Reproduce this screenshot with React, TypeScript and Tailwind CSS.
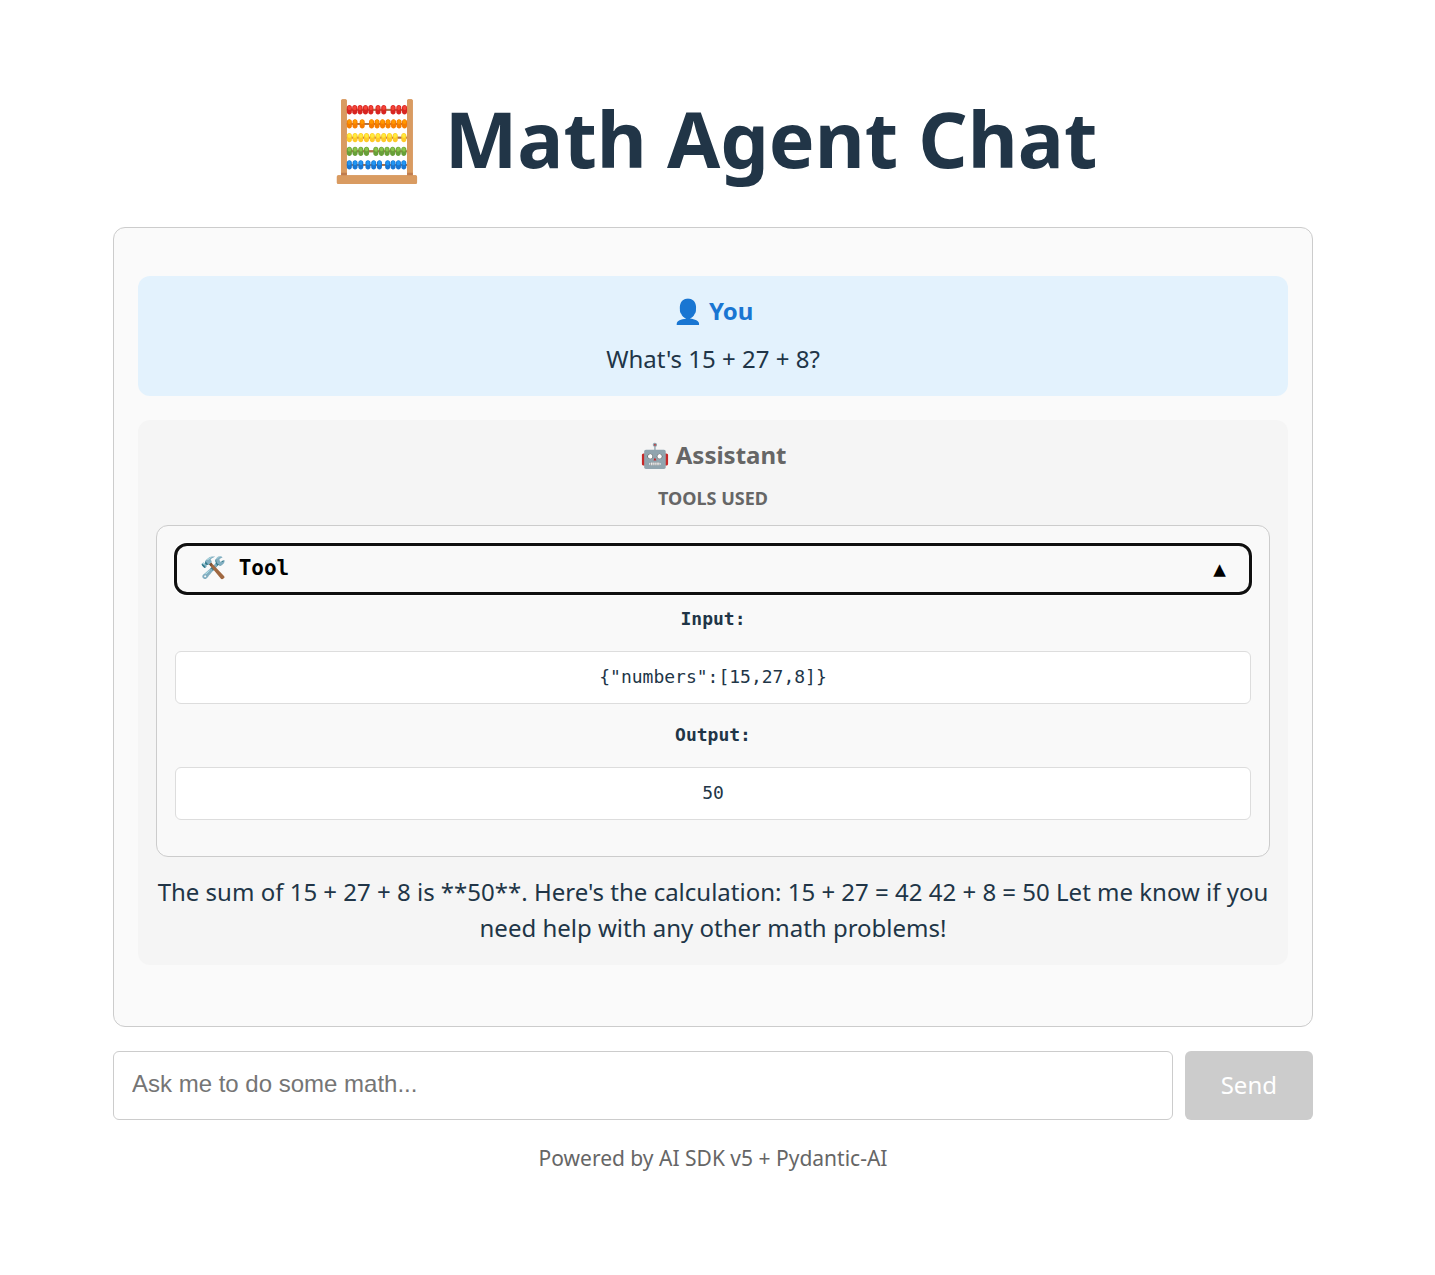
import { useState } from 'react';

const input = '{"numbers":[15,27,8]}';

function Panel({ label, value }: { label: string; value: string }) {
  return (
    <div>
      <strong className="block pb-0.5 leading-[25px]">{label}</strong>
      <pre className="my-[18px] rounded-md border border-[#dddddd] bg-white px-3 pt-3 pb-3.5 font-['DejaVu_Sans_Mono',monospace] leading-[25px]">{value}</pre>
    </div>
  );
}

export default function App() {
  const [open, setOpen] = useState(true);
  const [text, setText] = useState('');
  return (
    <div className="flex justify-center pr-[9px]">
      <main className="w-full max-w-[1296px] px-12 py-24 text-center font-['Noto_Sans',sans-serif] text-2xl leading-9 text-[#213547]">
        <h1 className="mb-[45px] text-[77px] leading-[86px] font-bold">🧮 Math Agent Chat</h1>
        <section className="min-h-[800px] rounded-xl border border-[#cccccc] bg-[#fafafa] px-6 py-12">
          <article className="mb-6 rounded-xl bg-[#e3f2fd] px-[18px] pt-[17px] pb-[19px]">
            <h2 className="mb-3 font-bold text-[#1976d2]">👤 You</h2>
            <p>What's 15 + 27 + 8?</p>
          </article>
          <article className="rounded-xl bg-[#f5f5f5] px-[18px] pt-[17px] pb-[19px]">
            <h2 className="mb-3 font-bold text-[#666666]">🤖 Assistant</h2>
            <h3 className="mb-[13px] text-lg leading-[27px] font-bold text-[#666666]">TOOLS USED</h3>
            <div className="mb-[17px] rounded-xl border border-[#cccccc] bg-[#f9f9f9] p-[18px] font-['DejaVu_Sans_Mono',monospace] text-lg">
              <button
                type="button"
                aria-expanded={open}
                onClick={() => setOpen(!open)}
                className="mb-3 flex w-full items-center justify-between rounded-xl px-[25px] pt-[9px] pb-[11px] text-[21px] leading-7 font-bold text-black ring-2 ring-white outline-[3px] -outline-offset-2 outline-[#101010] outline-solid"
              >
                <span>🛠️ Tool</span>
                <span className="pt-0.5">▲</span>
              </button>
              {open && (
                <div>
                  <Panel label="Input:" value={input} />
                  <Panel label="Output:" value="50" />
                </div>
              )}
            </div>
            <p>
              The sum of 15 + 27 + 8 is **50**. Here's the calculation: 15 + 27 = 42 42 + 8 = 50 Let me know if you
              need help with any other math problems!
            </p>
          </article>
        </section>
        <form className="mt-6 flex gap-3" onSubmit={(e) => e.preventDefault()}>
          <input
            type="text"
            aria-label="Message"
            placeholder="Ask me to do some math..."
            value={text}
            onChange={(e) => setText(e.target.value)}
            className="min-w-0 flex-1 rounded-md border border-[#cccccc] bg-white px-[18px] pb-[3px] font-['Liberation_Sans',sans-serif] placeholder:text-[#757575]"
          />
          <button type="submit" disabled={!text} className="rounded-md bg-[#cccccc] px-9 pt-4 pb-[18px] leading-[35px] text-white">
            Send
          </button>
        </form>
        <footer className="mt-6 text-[21px] leading-[29px] text-[#666666]">Powered by AI SDK v5 + Pydantic-AI</footer>
      </main>
    </div>
  );
}
